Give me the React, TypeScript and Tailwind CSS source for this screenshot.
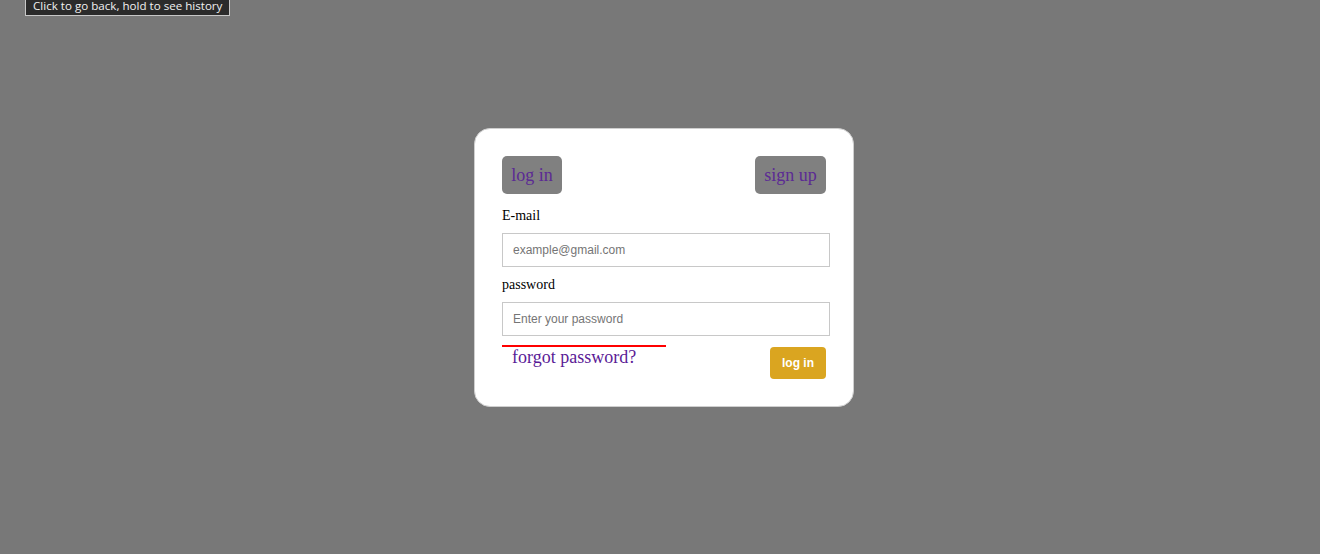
export default function App() {
  return (
    <div className="relative h-[554px] w-full overflow-hidden bg-[#787878]">
      <div className="absolute left-[25px] top-[-5px] whitespace-nowrap border border-[#c8c8c8] bg-[#2b2b2b] px-[7px] pt-[1px] pb-[1px] text-[11.6px] leading-[17px] text-[#f0f0f0] [font-family:'Open_Sans',sans-serif]">
        Click to go back, hold to see history
      </div>

      <div className="ml-[474px] pt-[128px]">
        <div className="box-border w-[380px] rounded-[16px] border border-[#cfcfcf] bg-white pl-[27px] pr-[23px] pt-[27px] pb-[27px] [font-family:'Liberation_Serif',serif]">
          <div className="flex items-center justify-between pr-[4px]">
            <button className="h-[38px] w-[60px] rounded-[5px] bg-[#808080] text-[18px] text-[#5b2a94]">log in</button>
            <button className="h-[38px] w-[71px] rounded-[5px] bg-[#808080] text-[18px] text-[#5b2a94]">sign up</button>
          </div>

          <label className="mt-[14px] block text-[14px] leading-[16px] text-black">E-mail</label>
          <input
            type="text"
            placeholder="example@gmail.com"
            className="mt-[9px] block h-[34px] w-full border border-[#c8c8c8] px-[10px] text-[12px] outline-none placeholder:text-[#757575] [font-family:'Liberation_Sans',sans-serif]"
          />

          <label className="mt-[10px] block text-[14px] leading-[16px] text-black">password</label>
          <input
            type="password"
            placeholder="Enter your password"
            className="mt-[9px] block h-[34px] w-full border border-[#c8c8c8] px-[10px] text-[12px] outline-none placeholder:text-[#757575] [font-family:'Liberation_Sans',sans-serif]"
          />

          <div className="flex items-start justify-between pr-[4px]">
            <div className="mt-[9px]">
              <div className="h-[2px] w-[164px] bg-[#ff0000]" />
              <a className="ml-[10px] block text-[18px] leading-[20px] text-[#5a1a96]">forgot password?</a>
            </div>
            <button className="mt-[11px] h-[32px] w-[56px] rounded-[4px] bg-[#daa520] text-[12px] font-bold text-white [font-family:'Liberation_Sans',sans-serif]">
              log in
            </button>
          </div>
        </div>
      </div>
    </div>
  )
}
